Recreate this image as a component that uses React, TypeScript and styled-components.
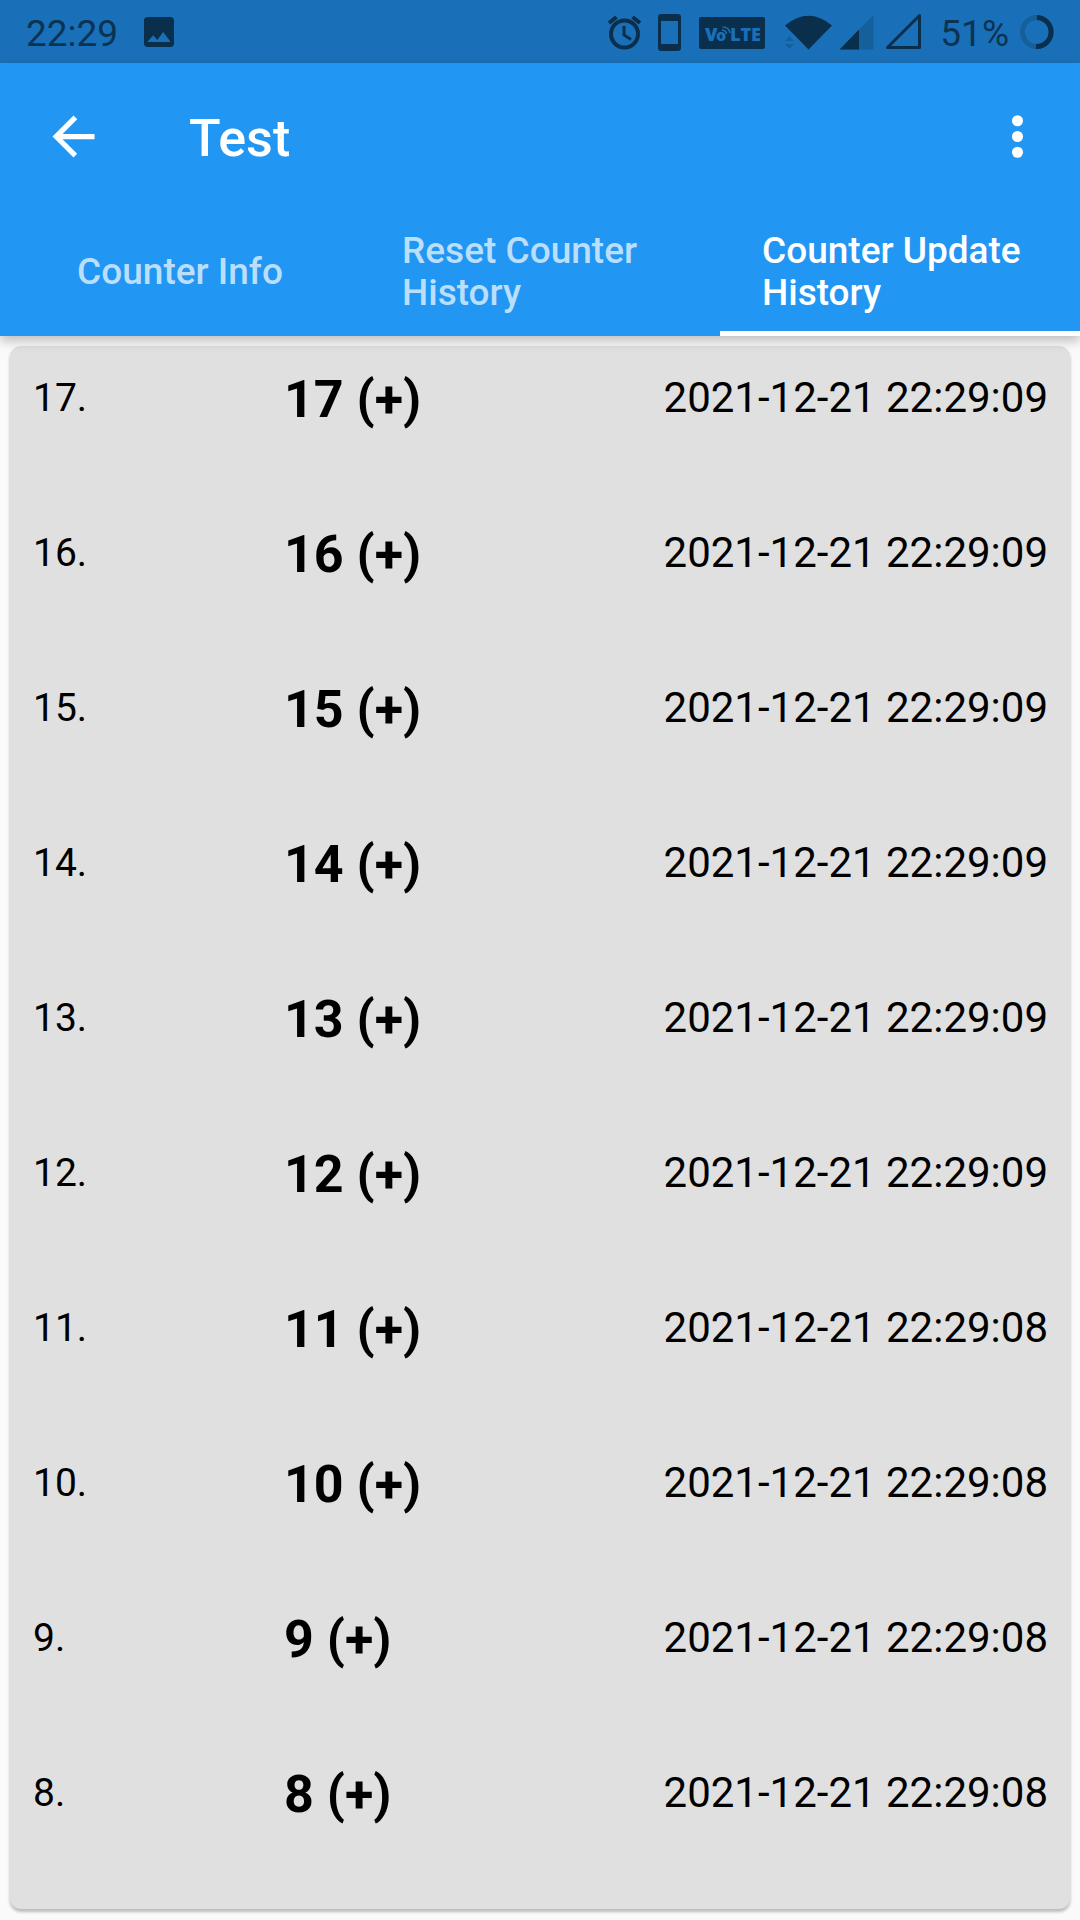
import React from "react";
import styled, { createGlobalStyle } from "styled-components";

const GlobalStyle = createGlobalStyle`
  *, *::before, *::after { box-sizing: border-box; }
  body {
    margin: 0;
    background: #fafafa;
    color: #000;
    font-family: Roboto, "Noto Sans", sans-serif;
  }
`;

const ink = "#0a2f4d";
const inkFaint = "#155f9b";
const statusBlue = "#1a70b8";

const Screen = styled.div`
  min-height: 100vh;
  display: flex;
  flex-direction: column;
`;

const StatusBar = styled.div`
  height: 63px;
  padding: 0 26px;
  display: flex;
  align-items: center;
  justify-content: space-between;
  background: ${statusBlue};
  color: #0b3353;
  font-size: 37px;
  line-height: 44px;
  svg { display: block; }
`;

const StatusGroup = styled.div<{ $gap: number }>`
  display: flex;
  align-items: center;
  gap: ${(p) => p.$gap}px;
`;

const StatusText = styled.span`
  padding-top: 4px;
`;

const AppBar = styled.header`
  position: relative;
  background: #2196f3;
  color: #fff;
  box-shadow: 0 4px 10px rgba(0, 0, 0, 0.2), 0 8px 12px rgba(0, 0, 0, 0.06);
`;

const Toolbar = styled.div`
  height: 147px;
  padding: 0 31px 0 41px;
  display: flex;
  align-items: center;
`;

const IconButton = styled.button`
  width: 64px;
  height: 64px;
  padding: 0;
  border: 0;
  background: none;
  color: inherit;
  display: flex;
  align-items: center;
  justify-content: center;
`;

const Title = styled.h1`
  flex: 1;
  margin: 0 0 0 84px;
  padding-top: 4px;
  font-size: 52px;
  font-weight: 500;
  line-height: 60px;
`;

const Tabs = styled.nav`
  height: 126px;
  display: grid;
  grid-template-columns: repeat(3, 1fr);
`;

const Tab = styled.button<{ $active?: boolean }>`
  padding: 3px 42px 0;
  border: 0;
  border-bottom: 5px solid ${(p) => (p.$active ? "#fff" : "transparent")};
  background: none;
  color: ${(p) => (p.$active ? "#fff" : "#bbdefb")};
  display: flex;
  align-items: center;
  justify-content: center;
  font-family: inherit;
  font-size: 37px;
  font-weight: 500;
  line-height: 42px;
  text-align: left;
`;

const Card = styled.main`
  flex: 1;
  margin: 10px 10px 11px;
  border-radius: 11px;
  background: #e0e0e0;
  box-shadow: 0 3px 3px rgba(0, 0, 0, 0.2), 0 2px 4px rgba(0, 0, 0, 0.08);
`;

const History = styled.table`
  width: 100%;
  table-layout: fixed;
  border-collapse: collapse;
`;

const Row = styled.tr`
  height: 155px;
  vertical-align: top;
`;

const IndexCell = styled.td`
  width: 274px;
  padding: 28px 0 0 23px;
  font-size: 39px;
  line-height: 48px;
`;

const CountCell = styled.td`
  width: 24%;
  padding: 28px 0 0;
  font-size: 52px;
  font-weight: 700;
  line-height: 52px;
`;

const TimeCell = styled.td`
  padding: 28px 22px 0 0;
  font-size: 42px;
  line-height: 48px;
  text-align: right;
  white-space: nowrap;
`;

const tabs = ["Counter Info", "Reset Counter History", "Counter Update History"];

const updates = [17, 16, 15, 14, 13, 12, 11, 10, 9, 8].map((n) => ({
  n,
  time: `2021-12-21 22:29:${n > 11 ? "09" : "08"}`,
}));

const PictureIcon = () => (
  <svg width="30" height="30" viewBox="3 3 18 18" fill={ink}>
    <path d="M21 19V5c0-1.100-.9-2-2-2H5c-1.100 0-2 .9-2 2v14c0 1.100.9 2 2 2h14c1.100 0 2-.9 2-2zM8.500 14l2.500 2.800L14.500 12l4.500 6H5l3.500-4z" />
  </svg>
);

const StatusIcons = () => (
  <svg width="315" height="40" viewBox="608 11 315 40" fill="none">
    <g stroke={ink} strokeWidth="4">
      <circle cx="625.500" cy="33" r="13.500" />
      <path d="M625 25v9l7 4.500" strokeWidth="3" />
      <path d="M610 22l7.500-6M641 22l-7.500-6" />
    </g>
    <path fill={ink} fillRule="evenodd" d="M662 13h17a3 3 0 0 1 3 3v31a3 3 0 0 1-3 3h-17a3 3 0 0 1-3-3V16a3 3 0 0 1 3-3zM662 20v23h17V20z" />
    <rect x="700" y="16" width="66" height="32" rx="2" fill={ink} />
    <g fill={statusBlue} fontFamily="Open Sans, sans-serif" fontWeight="800" fontSize="18">
      <text x="706" y="40">V</text>
      <text x="717" y="40" fontSize="16">o</text>
      <text x="731" y="40">LTE</text>
    </g>
    <g stroke={statusBlue} strokeWidth="1.500">
      <path d="M723 29q4 0 4.500 4M723.500 26q6.500 0 7.500 6" />
    </g>
    <path fill={ink} d="M786 24.500Q809.500 5 833 24.500L809.500 48.500z" />
    <path fill={inkFaint} d="M790.500 35l4.500 5h-9zM790.500 48l4.500-5h-9z" />
    <path fill={inkFaint} d="M841 48.500L874.500 14v34.500z" />
    <path fill={ink} d="M840.500 48.500L860 28.500v20z" />
    <path stroke={ink} strokeWidth="3" strokeLinejoin="round" d="M888.500 46.500L920.500 14.500v32z" />
  </svg>
);

const BatteryRing = () => (
  <svg width="34" height="34" viewBox="0 0 34 34" fill="none" strokeWidth="5">
    <circle cx="17" cy="17" r="14.500" stroke={inkFaint} />
    <path d="M17 2.500a14.500 14.500 0 1 1-1 29" stroke={ink} />
  </svg>
);

export default function App() {
  return (
    <Screen>
      <GlobalStyle />
      <StatusBar>
        <StatusGroup $gap={26}>
          <StatusText>22:29</StatusText>
          <PictureIcon />
        </StatusGroup>
        <StatusGroup $gap={11}>
          <StatusGroup $gap={18}>
            <StatusIcons />
            <StatusText>51%</StatusText>
          </StatusGroup>
          <BatteryRing />
        </StatusGroup>
      </StatusBar>
      <AppBar>
        <Toolbar>
          <IconButton aria-label="Back">
            <svg width="63" height="63" viewBox="0 0 24 24" fill="currentColor">
              <path d="M20 11H7.830l5.590-5.590L12 4l-8 8 8 8 1.410-1.410L7.830 13H20v-2z" />
            </svg>
          </IconButton>
          <Title>Test</Title>
          <IconButton aria-label="More options">
            <svg width="63" height="63" viewBox="0 0 24 24" fill="currentColor">
              <circle cx="12" cy="6" r="2.100" />
              <circle cx="12" cy="12" r="2.100" />
              <circle cx="12" cy="18" r="2.100" />
            </svg>
          </IconButton>
        </Toolbar>
        <Tabs>
          {tabs.map((label, i) => (
            <Tab key={label} $active={i === 2}>
              <span>{label}</span>
            </Tab>
          ))}
        </Tabs>
      </AppBar>
      <Card>
        <History>
          <tbody>
            {updates.map(({ n, time }) => (
              <Row key={n}>
                <IndexCell>{n}.</IndexCell>
                <CountCell>{n} (+)</CountCell>
                <TimeCell>{time}</TimeCell>
              </Row>
            ))}
          </tbody>
        </History>
      </Card>
    </Screen>
  );
}
